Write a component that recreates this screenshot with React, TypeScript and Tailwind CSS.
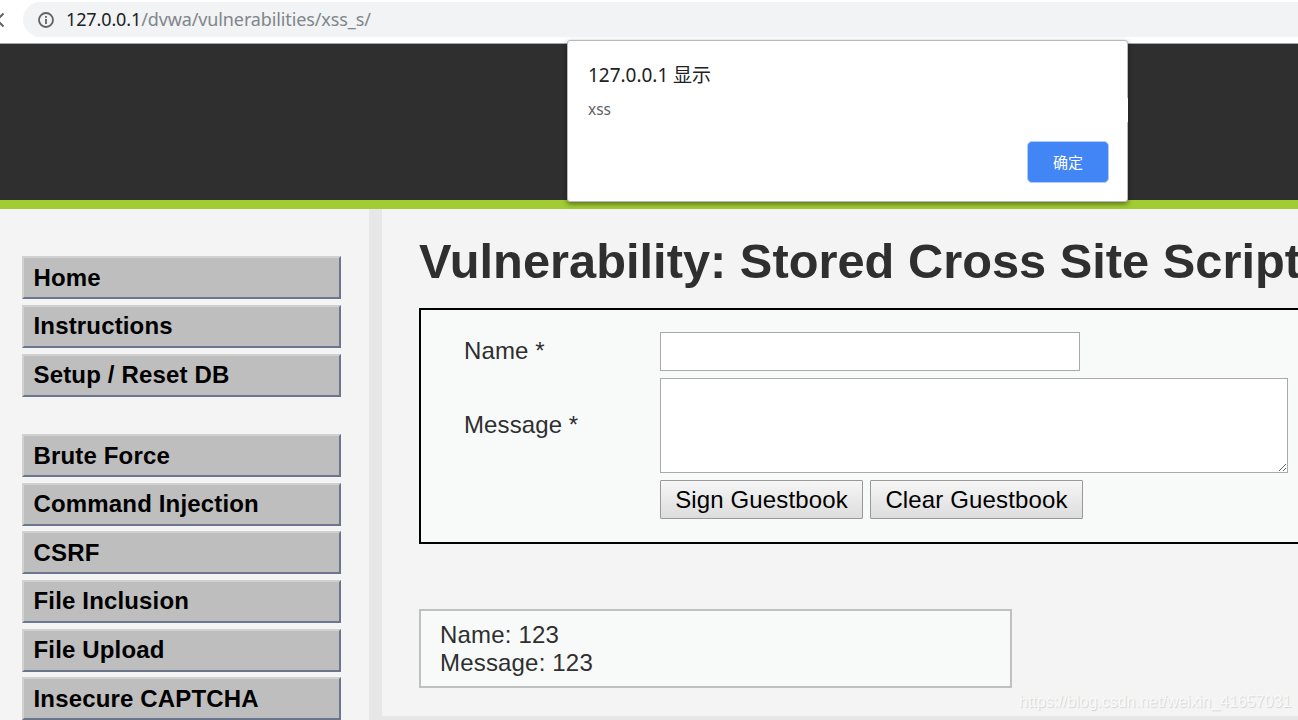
import React from "react";

const setupLinks = ["Home", "Instructions", "Setup / Reset DB"];
const vulnerabilityLinks = [
  "Brute Force",
  "Command Injection",
  "CSRF",
  "File Inclusion",
  "File Upload",
  "Insecure CAPTCHA",
];

function MenuGroup({ items }: { items: string[] }) {
  return (
    <ul className="flex flex-col gap-[5.6px]">
      {items.map((item) => (
        <li
          key={item}
          className="h-[43px] w-[319px] cursor-pointer border-2 border-t-[#d1d1d1] border-r-[#6b768c] border-b-[#6b768c] border-l-[#d1d1d1] bg-[#bebebe] pt-[0.4px] pl-[9.5px] text-[24px] leading-[37px] font-bold tracking-[0.16px] whitespace-nowrap text-black"
        >
          {item}
        </li>
      ))}
    </ul>
  );
}

function AddressBar() {
  return (
    <div className="flex h-[44px] items-start border-b border-[#a5a8a8] bg-white pt-[2px]">
      <svg className="h-[35px] w-[23px] shrink-0" viewBox="0 0 23 35" fill="none" stroke="#5f6368" strokeWidth="2">
        <path d="M3.5 11.5L-3 18L3.5 24.5" />
      </svg>
      <div className="flex h-[35px] flex-1 items-center rounded-l-full bg-[#f1f3f4] pl-[15px]">
        <svg className="h-4 w-4 shrink-0" viewBox="0 0 16 16" fill="none" stroke="#5f6368" strokeWidth="1.8">
          <circle cx="8" cy="8" r="7" />
          <path d="M8 7V12M8 4V5.8" />
        </svg>
        <span className="ml-[12px] font-['Noto_Sans',sans-serif] text-[18px] leading-[35px] tracking-[-0.12px] text-[#202124]">
          127.0.0.1<span className="text-[#80868b]">/dvwa/vulnerabilities/xss_s/</span>
        </span>
      </div>
    </div>
  );
}

function AlertDialog() {
  return (
    <div
      role="alertdialog"
      className="absolute top-[40px] left-[567px] h-[162px] w-[561px] rounded-[3px] border border-[#b9b9b9] bg-white pt-[20px] pr-[19px] pl-[20px] font-['Noto_Sans','Noto_Sans_CJK_SC',sans-serif] shadow-[0_2px_5px_rgba(0,0,0,0.45)]"
    >
      <h2 className="text-[19px] leading-[29px] tracking-[-0.03px] text-[#202124]">127.0.0.1 显示</h2>
      <p className="mt-[5px] text-[15.5px] leading-[28px] text-[#5f6368]">xss</p>
      <div className="mt-[18px] flex justify-end">
        <button className="-mr-[1px] h-[42px] w-[82px] rounded-[5px] border border-[#aecbfa] bg-[#4285f4] text-[15px] text-white">
          确定
        </button>
      </div>
      <span className="absolute top-[57px] -right-px h-6 w-px bg-white" />
    </div>
  );
}

function GuestbookForm() {
  const button =
    "h-[39px] rounded-[1px] border border-[#999] bg-linear-to-b from-[#f6f6f6] to-[#dddddd] text-[24px] leading-[36px] tracking-[0.14px] whitespace-nowrap text-black";
  const label = "w-[196px] pb-[2px] text-[24px] tracking-[0.1px]";
  return (
    <form className="mt-[17px] h-[236px] w-[940px] border-2 border-black bg-[#f8faf9] pt-[22px] pl-[43px]">
      <div className="flex items-center">
        <label className={label}>Name *</label>
        <input className="h-[39px] w-[420px] border border-[#a9a9a9] bg-white" />
      </div>
      <div className="mt-[7px] flex items-center">
        <label className={label}>Message *</label>
        <textarea className="block h-[95px] w-[628px] border border-[#a9a9a9] bg-white" />
      </div>
      <div className="mt-[7px] ml-[196px] flex gap-[7px]">
        <button type="button" className={`w-[203px] ${button}`}>
          Sign Guestbook
        </button>
        <button type="button" className={`w-[213px] ${button}`}>
          Clear Guestbook
        </button>
      </div>
    </form>
  );
}

export default function App() {
  return (
    <div className="relative flex h-[720px] w-[1298px] flex-col overflow-hidden bg-[#e7e7e7] font-['Liberation_Sans',Arial,sans-serif] text-[#2f2f2f]">
      <AddressBar />
      <header className="h-[165px] shrink-0 border-b-[9px] border-[#a1cc33] bg-[#2f2f2f]" />
      <div className="flex min-h-0 flex-1">
        <nav className="flex w-[369px] shrink-0 flex-col gap-[37.6px] overflow-hidden bg-[#f4f4f4] pt-[47.4px] pl-[22px]">
          <MenuGroup items={setupLinks} />
          <MenuGroup items={vulnerabilityLinks} />
        </nav>
        <main className="ml-[13px] h-[507px] min-w-0 flex-1 overflow-hidden bg-[#f4f4f4] pt-[22px] pl-[37px]">
          <h1 className="h-[60px] text-[48.75px] leading-[60px] font-bold tracking-[0.02px] whitespace-nowrap">
            Vulnerability: Stored Cross Site Scripting (XSS)
          </h1>
          <GuestbookForm />
          <section className="mt-[65px] h-[79px] w-[593px] border-2 border-[#c0c0c0] bg-[#f8faf9] pt-[10px] pl-[19px] text-[24px] leading-[28px] tracking-[0.18px]">
            <p>Name: 123</p>
            <p>Message: 123</p>
          </section>
        </main>
      </div>
      <AlertDialog />
      <span className="absolute top-[692px] left-[1019px] text-[16px] leading-[20px] whitespace-nowrap text-[#f9f9f9] [text-shadow:1px_1px_1px_#d4d4d4]">
        https://blog.csdn.net/weixin_41657031
      </span>
    </div>
  );
}
